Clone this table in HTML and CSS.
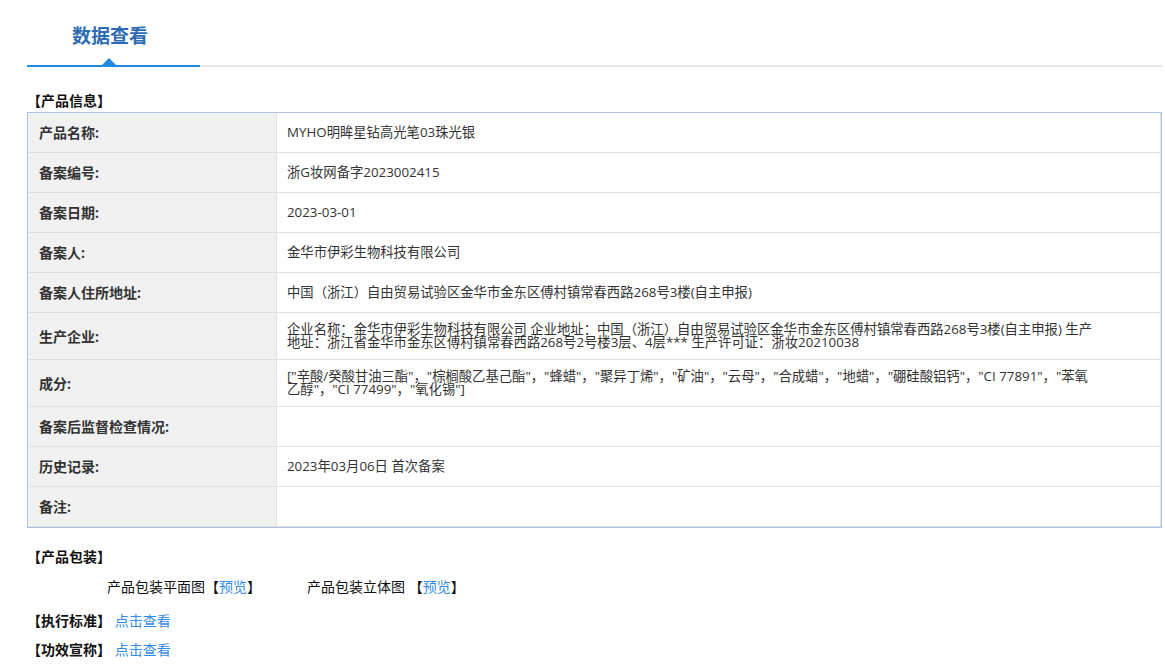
FILE: index.html
```html
<!DOCTYPE html>
<html lang="zh-CN">
<head>
<meta charset="utf-8">
<title>数据查看</title>
<link rel="stylesheet" href="styles.css">
</head>
<body>
<div class="page">
  <div class="tabs">
    <div class="tab active"><span class="tab-title">数据查看</span><span class="caret"></span></div>
    <div class="tab-rest"></div>
  </div>

  <div class="sec-head first">【产品信息】</div>
  <table class="info">
    <tbody>
      <tr><td class="label">产品名称:</td><td class="value">MYHO明眸星钻高光笔03珠光银</td></tr>
      <tr><td class="label">备案编号:</td><td class="value">浙G妆网备字2023002415</td></tr>
      <tr><td class="label">备案日期:</td><td class="value">2023-03-01</td></tr>
      <tr><td class="label">备案人:</td><td class="value">金华市伊彩生物科技有限公司</td></tr>
      <tr><td class="label">备案人住所地址:</td><td class="value">中国（浙江）自由贸易试验区金华市金东区傅村镇常春西路268号3楼(自主申报)</td></tr>
      <tr><td class="label">生产企业:</td><td class="value">企业名称：金华市伊彩生物科技有限公司 企业地址：中国（浙江）自由贸易试验区金华市金东区傅村镇常春西路268号3楼(自主申报) 生产地址：浙江省金华市金东区傅村镇常春西路268号2号楼3层、4层*** 生产许可证：浙妆20210038</td></tr>
      <tr><td class="label">成分:</td><td class="value">["辛酸/癸酸甘油三酯"，"棕榈酸乙基己酯"，"蜂蜡"，"聚异丁烯"，"矿油"，"云母"，"合成蜡"，"地蜡"，"硼硅酸铝钙"，"CI 77891"，"苯氧乙醇"，"CI 77499"，"氧化锡"]</td></tr>
      <tr><td class="label">备案后监督检查情况:</td><td class="value"></td></tr>
      <tr><td class="label">历史记录:</td><td class="value">2023年03月06日 首次备案</td></tr>
      <tr><td class="label">备注:</td><td class="value"></td></tr>
    </tbody>
  </table>

  <div class="sec-head pack">【产品包装】</div>
  <div class="pack-row">
    <span class="pack-item">产品包装平面图【<a class="link" href="#">预览</a>】</span>
    <span class="pack-item">产品包装立体图 【<a class="link" href="#">预览</a>】</span>
  </div>
  <div class="sec-head std">【执行标准】 <a class="link" href="#">点击查看</a></div>
  <div class="sec-head claim">【功效宣称】 <a class="link" href="#">点击查看</a></div>
</div>
</body>
</html>
```

FILE: styles.css
```css
html, body {
  margin: 0;
  padding: 0;
  background: #fff;
}
body {
  font-family: "Open Sans", "Noto Sans CJK SC", sans-serif;
  font-size: 13.33px;
  color: #333;
}
.page {
  margin-left: 27px;
  width: 1135px;
}
.tabs {
  display: flex;
  height: 67px;
}
.tab {
  position: relative;
  width: 173px;
  box-sizing: border-box;
  padding: 24px 0 0 45px;
  border-bottom: 2px solid #2289e0;
}
.tab-title {
  display: block;
  font-size: 19px;
  line-height: 24px;
  font-weight: bold;
  color: #2d6cb4;
}
.caret {
  position: absolute;
  left: 75px;
  bottom: 0;
  width: 0;
  height: 0;
  border-left: 7px solid transparent;
  border-right: 7px solid transparent;
  border-bottom: 7px solid #2289e0;
}
.tab-rest {
  flex: 1;
  border-bottom: 2px solid #e6e6e6;
}
.sec-head {
  font-size: 14px;
  font-weight: bold;
  color: #111;
  line-height: 20px;
  height: 20px;
}
.sec-head.first { margin-top: 24px; margin-bottom: 1px; }
.sec-head.pack { margin-top: 19px; }
.sec-head.std { margin-top: 14px; }
.sec-head.claim { margin-top: 9px; }
.info {
  width: 1135px;
  border-collapse: separate;
  border-spacing: 0;
  border: 1px solid #a9c4e8;
  table-layout: fixed;
}
.info tr {
  height: 40px;
}
.info td {
  padding: 10px 10px;
  line-height: 13px;
  vertical-align: middle;
  border-bottom: 1px solid #e2e2e2;
}
.info td.label {
  width: 227px;
  padding-left: 11px;
  background: #f1f1f1;
  font-size: 14px;
  font-weight: bold;
  color: #333;
  border-right: 1px solid #e2e2e2;
}
.info td.value {
  color: #333;
  padding-right: 64px;
  border-right: 1px solid #e2e2e2;
}
.pack-row {
  display: flex;
  gap: 46px;
  margin-top: 10px;
  padding-left: 80px;
  font-size: 14px;
  line-height: 20px;
  color: #111;
}
.link {
  color: #318ce7;
  text-decoration: none;
  font-weight: normal;
}
```
